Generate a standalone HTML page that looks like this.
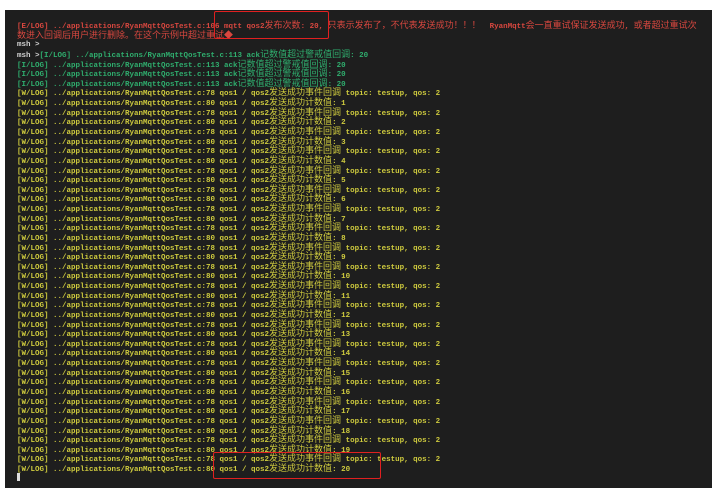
<!DOCTYPE html><html><head><meta charset="utf-8"><style>
body{margin:0;background:#fff;width:719px;height:497px;overflow:hidden;position:relative}
.t{position:absolute;left:5px;top:10px;width:707px;height:478px;background:#1e1e1e}
.l{position:absolute;left:17px;white-space:pre;font-family:"Liberation Mono","Noto Sans CJK SC",monospace;font-size:7.5px;line-height:9.6px;font-weight:bold}
.l i{font-style:normal;font-size:9px;font-weight:normal}
.r{color:#d8473f}.g{color:#2fae6e}.y{color:#cfcb3e}.w{color:#d0d0d0}
.b{position:absolute;border:1.5px solid #e02020;border-radius:2px}
</style></head><body><div class="t"></div>
<div id="c"></div>
<div class="b" style="left:214px;top:11px;width:113px;height:26px"></div>
<div class="b" style="left:213px;top:452px;width:166px;height:25px"></div>
<div style="position:absolute;left:17px;top:473px;width:3px;height:8px;background:#ddd"></div>
<script>
var L=[["r","[E/LOG] ../applications/RyanMqttQosTest.c:106 mqtt qos2发布次数: 20, 只表示发布了，不代表发送成功！！！  RyanMqtt会一直重试保证发送成功, 或者超过重试次"],["r","数进入回调后用户进行删除。在这个示例中超过重试◆"],["w","msh >"],["g","msh >[I/LOG] ../applications/RyanMqttQosTest.c:113 ack记数值超过警戒值回调: 20"]];
for(var i=0;i<3;i++)L.push(["g","[I/LOG] ../applications/RyanMqttQosTest.c:113 ack记数值超过警戒值回调: 20"]);
for(var n=1;n<=20;n++){L.push(["y","[W/LOG] ../applications/RyanMqttQosTest.c:78 qos1 / qos2发送成功事件回调 topic: testup, qos: 2"]);L.push(["y","[W/LOG] ../applications/RyanMqttQosTest.c:80 qos1 / qos2发送成功计数值: "+n]);}
var h="";L.forEach(function(x,i){var s=x[1].replace(/[^\x00-\x7f]+/g,function(m){return '<i>'+m+'</i>'}).replace(/^msh >\[/,'<span class="w">msh &gt;</span>[');h+='<div class="l '+x[0]+'" style="top:'+(22+i*9.63).toFixed(1)+'px">'+s+'</div>'});
document.getElementById("c").innerHTML=h;
</script></body></html>
